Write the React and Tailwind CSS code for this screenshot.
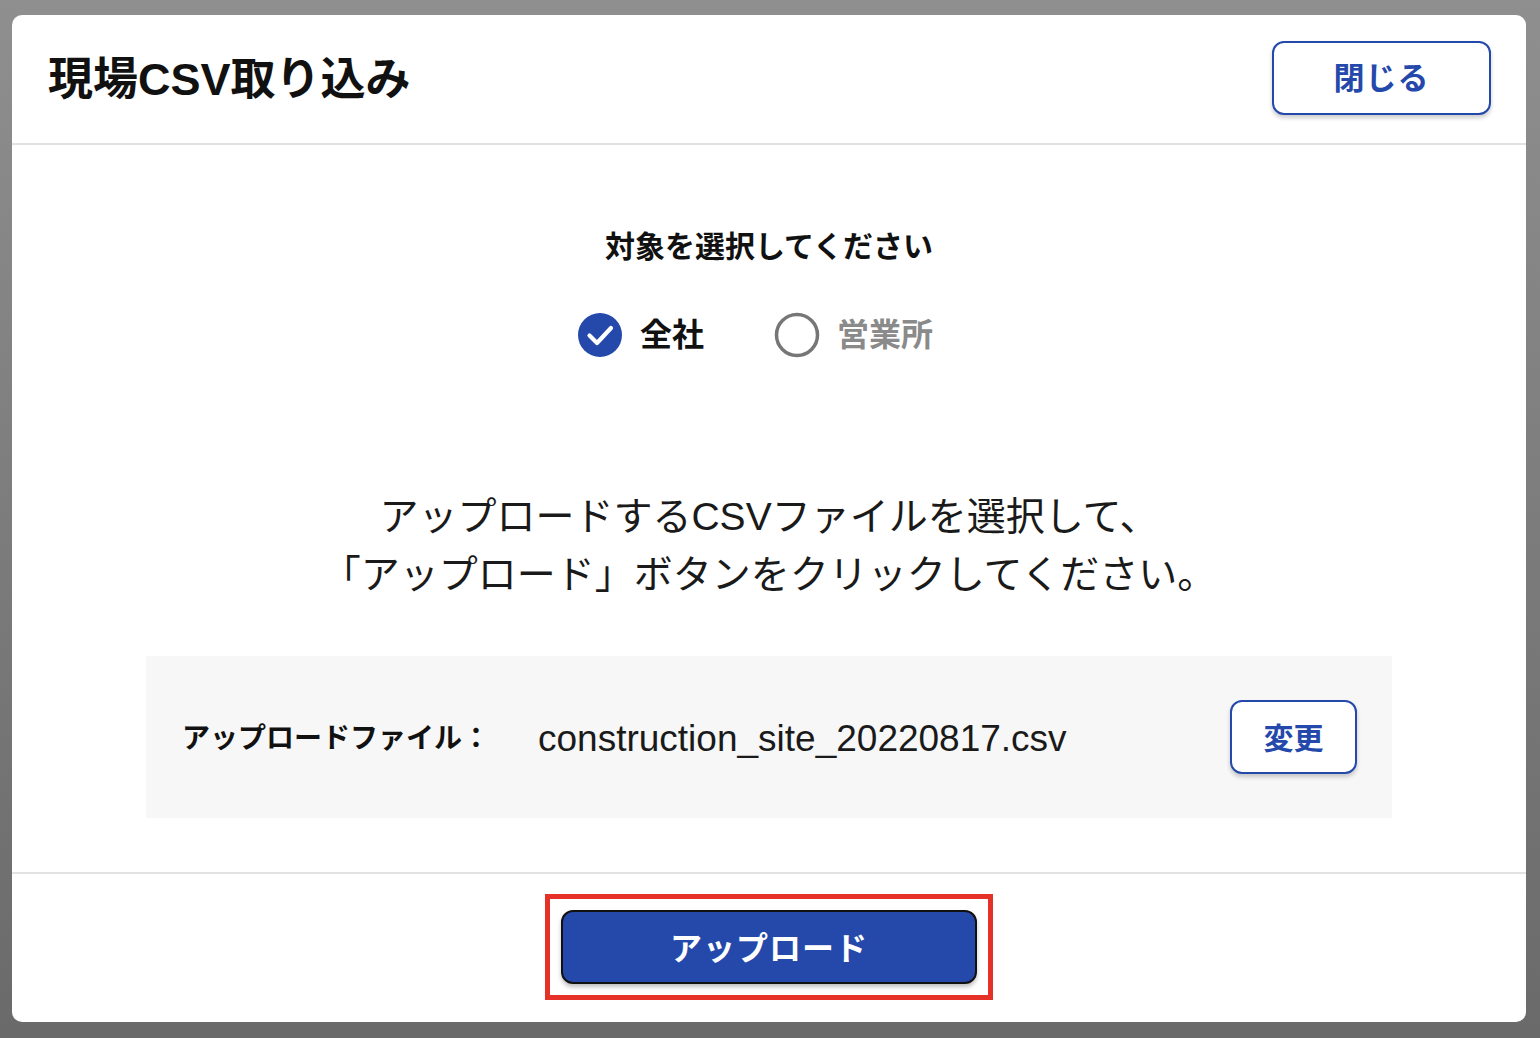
import React from "react";

const BLUE = "#2449ab";

function CheckedRadio() {
  return (
    <svg width="46" height="46" viewBox="0 0 46 46">
      <circle cx="23" cy="23" r="22" fill={BLUE} />
      <path
        d="M12.5 23.5 L20 31 L34 16"
        fill="none"
        stroke="#fff"
        strokeWidth="4.2"
        strokeLinecap="round"
        strokeLinejoin="round"
      />
    </svg>
  );
}

function EmptyRadio() {
  return (
    <svg width="46" height="46" viewBox="0 0 46 46">
      <circle cx="23" cy="23" r="20.5" fill="#fff" stroke="#767676" strokeWidth="3.5" />
    </svg>
  );
}

export default function App() {
  return (
    <div
      className="w-[1540px] h-[1038px] bg-gradient-to-b from-[#8f8f8f] to-[#6a6a6a] pt-[15px] pl-[12px] overflow-hidden"
      style={{ fontFamily: '"Liberation Sans", "Noto Sans CJK JP", sans-serif' }}
    >
      <div className="w-[1514px] h-[1007px] bg-white rounded-[10px] flex flex-col overflow-hidden">
        {/* Header */}
        <div className="h-[130px] shrink-0 flex items-center justify-between pl-[36px] pr-[35px] border-b-2 border-[#e2e2e2]">
          <h1 className="text-[45px] font-bold text-[#111] leading-none">
            現場CSV取り込み
          </h1>
          <button className="w-[219px] h-[74px] pt-[3px] rounded-[12px] border-2 border-[#2449ab] bg-white text-[#2449ab] text-[31px] font-bold shadow-[0_3px_4px_rgba(0,0,0,0.2)] -mt-[2px] tracking-[1px]">
            閉じる
          </button>
        </div>

        {/* Body */}
        <div className="h-[729px] shrink-0 flex flex-col items-center border-b-2 border-[#e2e2e2]">
          <p className="mt-[82px] text-[30px] font-bold text-[#111] leading-[40px]">
            対象を選択してください
          </p>
          <div className="mt-[44px] mr-[28px] flex items-center h-[48px]">
            <div className="flex items-center gap-[17px]">
              <CheckedRadio />
              <span className="text-[32px] font-bold text-[#111]">全社</span>
            </div>
            <div className="flex items-center gap-[17px] ml-[70px]">
              <EmptyRadio />
              <span className="text-[32px] font-bold text-[#8a8a8a]">営業所</span>
            </div>
          </div>
          <div className="mt-[129px] text-center text-[39px] text-[#1a1a1a] leading-[58px]">
            <p>アップロードするCSVファイルを選択して、</p>
            <p>「アップロード」ボタンをクリックしてください。</p>
          </div>
          <div className="mt-[52px] w-[1246px] h-[162px] bg-[#f7f7f7] flex items-center pl-[36px] pr-[35px]">
            <span className="text-[28px] font-bold text-[#111] w-[356px] shrink-0 mt-[4px]">
              アップロードファイル：
            </span>
            <span className="flex-1 text-[37px] text-[#1a1a1a] mt-[4px]">
              construction_site_20220817.csv
            </span>
            <button className="w-[127px] h-[74px] pt-[3px] rounded-[12px] border-2 border-[#2449ab] bg-white text-[#2449ab] text-[30px] font-bold shadow-[0_3px_4px_rgba(0,0,0,0.2)]">
              変更
            </button>
          </div>
        </div>

        {/* Footer */}
        <div className="flex-1 flex items-center justify-center">
          <div className="border-[5px] border-[#e53127] p-[11px] -mt-[3px]">
            <button className="w-[416px] h-[74px] pt-[4px] rounded-[12px] bg-[#2449ab] border-2 border-[#111] text-white text-[32px] font-bold shadow-[0_3px_4px_rgba(0,0,0,0.25)] tracking-[1px]">
              アップロード
            </button>
          </div>
        </div>
      </div>
    </div>
  );
}
